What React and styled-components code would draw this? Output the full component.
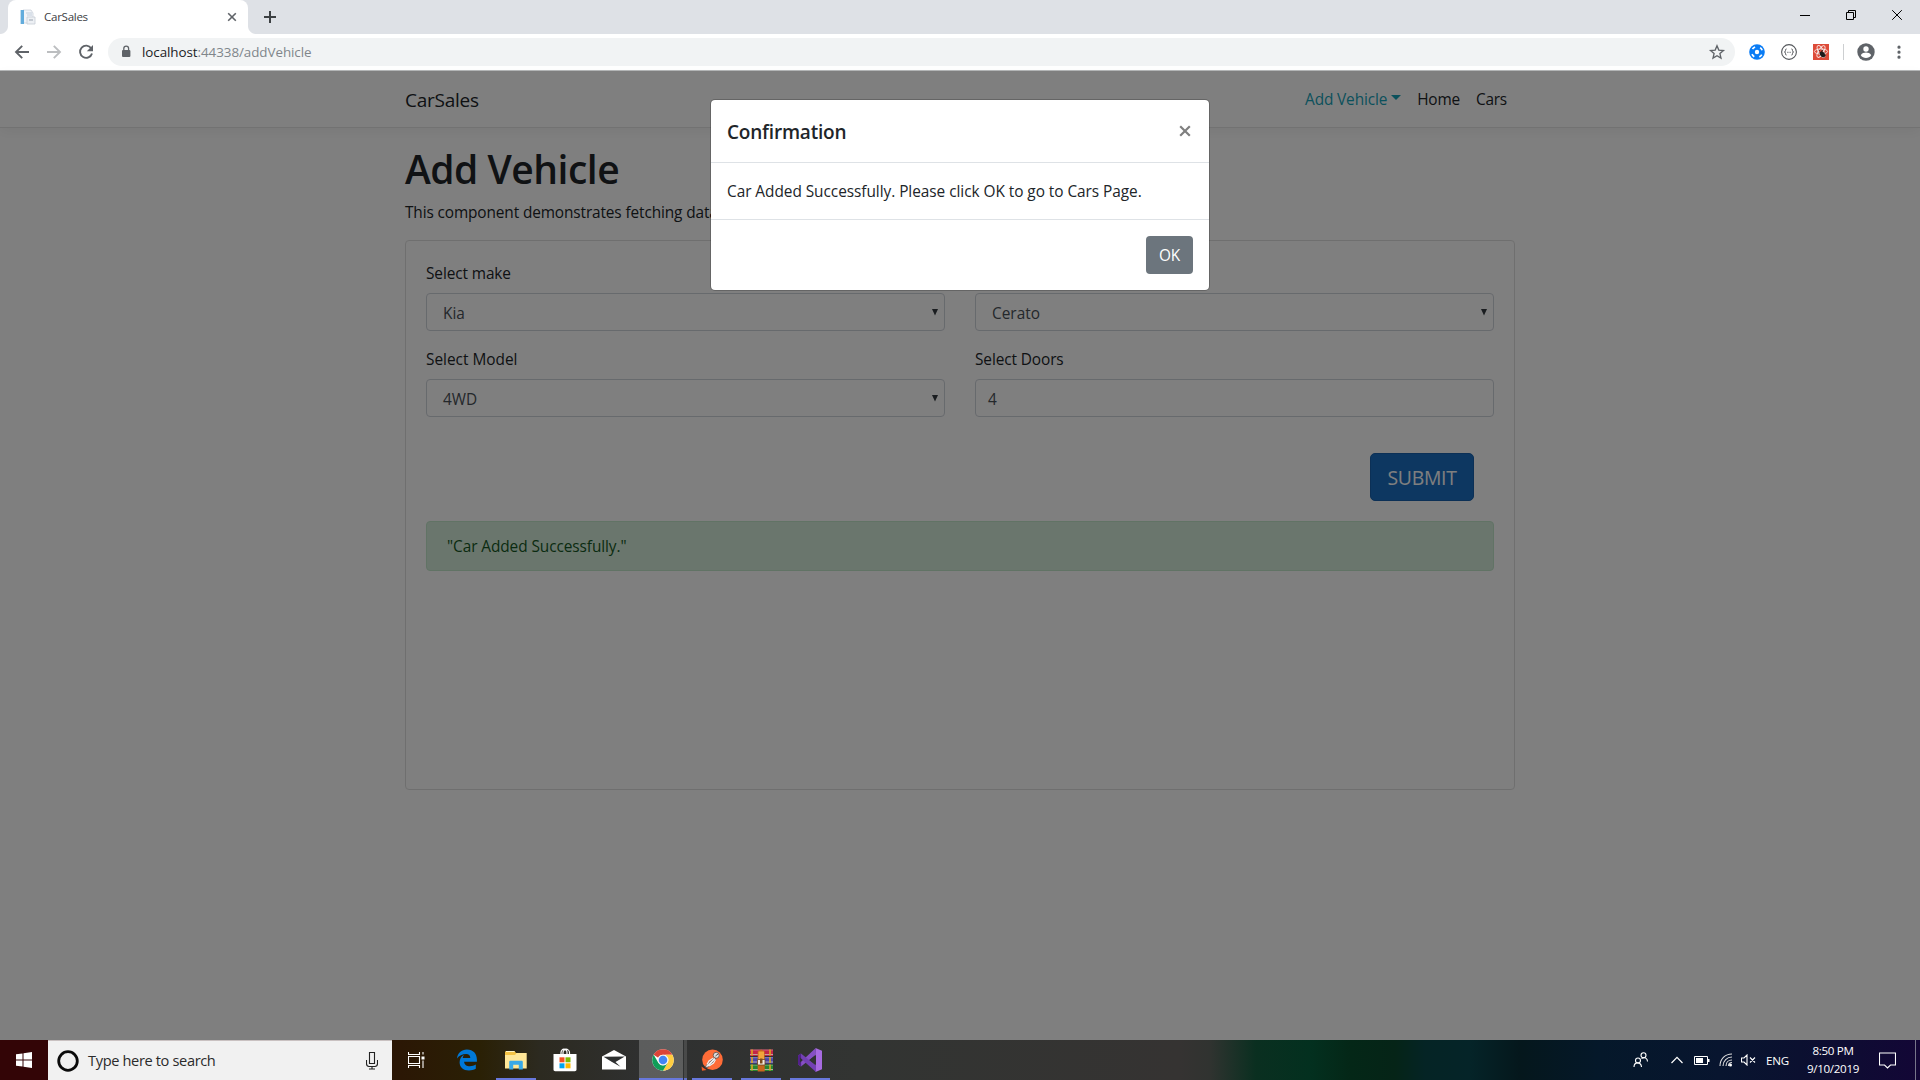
import React from 'react';
import styled, { createGlobalStyle } from 'styled-components';

const Global = createGlobalStyle`
  *, *::before, *::after { box-sizing: border-box; }
  body { margin: 0; background: #fff; }
  button, input { font: inherit; }
`;

const Screen = styled.div`
  width: 1920px;
  height: 1080px;
  display: flex;
  flex-direction: column;
  overflow: hidden;
  font-family: "Open Sans", "Noto Sans", sans-serif;
  font-size: 15.4px;
  line-height: 24px;
  color: #212529;
`;

const Text = styled.span`
  display: block;
  white-space: nowrap;
  padding-top: 1px;
  margin-bottom: -1px;
  letter-spacing: ${(p) => p.$ls || 0}px;
`;

/* ---------- browser ---------- */
const TabStrip = styled.header`
  height: 34px;
  flex: none;
  display: flex;
  background: #dee1e6;
  padding-left: 8px;
`;
const Tab = styled.div`
  width: 240px;
  height: 34px;
  display: flex;
  align-items: center;
  padding: 0 11px 0 12px;
  background: #fff;
  border-radius: 8px 8px 0 0;
  font-size: 11.6px;
  color: #3c4043;
  position: relative;
  &::before, &::after {
    content: "";
    position: absolute;
    bottom: 0;
    width: 8px;
    height: 8px;
  }
  &::before { left: -8px; background: radial-gradient(circle at 0 0, transparent 7.5px, #fff 8.5px); }
  &::after { right: -8px; background: radial-gradient(circle at 100% 0, transparent 7.5px, #fff 8.5px); }
  svg:last-child { margin-left: auto; }
`;
const TabTitle = styled.span`
  margin-left: 8px;
  letter-spacing: -0.3px;
`;
const NewTab = styled.div`
  display: flex;
  align-items: center;
  margin-left: 16px;
`;
const WindowButtons = styled.div`
  margin-left: auto;
  display: flex;
  height: 29px;
  > span { width: 46px; display: grid; place-items: center; }
`;
const Toolbar = styled.div`
  height: 37px;
  flex: none;
  display: flex;
  align-items: center;
  background: #fff;
  border-bottom: 1px solid #b6b8b9;
  padding: 0 12px;
`;
const NavButtons = styled.div`
  display: flex;
  gap: 12px;
`;
const AddressBar = styled.div`
  width: 1627px;
  height: 28px;
  margin-left: 12px;
  border-radius: 14px;
  background: #f1f3f4;
  display: flex;
  align-items: center;
  padding: 0 9px 0 12px;
  font-size: 13.4px;
  color: #80868b;
  b { font-weight: 400; color: #202124; }
  svg:last-child { margin-left: auto; }
`;
const Url = styled.span`
  margin-left: 10px;
  letter-spacing: -0.06px;
`;
const Extensions = styled.div`
  display: flex;
  align-items: center;
  margin-left: 14px;
  gap: 16px;
`;
const Divider = styled.i`
  width: 1px;
  height: 16px;
  background: #cdcfd1;
  margin: 0 -3px 0 -2px;
`;

/* ---------- page ---------- */
const Page = styled.main`
  flex: 1;
  min-height: 0;
  position: relative;
  background: #fff;
`;
const Navbar = styled.nav`
  height: 57px;
  border-bottom: 1px solid #e5e5e5;
  box-shadow: 0 4px 12px rgba(0, 0, 0, 0.05);
  display: flex;
  justify-content: center;
`;
const Container = styled.div`
  width: 1110px;
  margin: 0 auto;
`;
const NavInner = styled(Container)`
  display: flex;
  align-items: center;
`;
const Brand = styled.div`
  font-size: 19px;
  line-height: 30px;
  flex: 1;
`;
const NavLinks = styled.div`
  display: flex;
  gap: 16px;
  padding-right: 8px;
`;
const NavItem = styled.a`
  color: ${(p) => (p.$accent ? '#17a2b8' : '#212529')};
  display: flex;
  align-items: center;
`;
const Caret = styled.i`
  margin-left: 4px;
  margin-top: -3px;
  border: 5px solid transparent;
  border-top-color: currentColor;
  border-bottom: 0;
`;
const Title = styled.h1`
  margin: 16px 0 8px;
  height: 48px;
  font-size: 39px;
  font-weight: 600;
  line-height: 48px;
`;
const Lead = styled.p`
  height: 24px;
  margin: 0 0 16px;
`;
const Card = styled.section`
  height: 550px;
  border: 1px solid #dfdfdf;
  border-radius: 4px;
  padding: 20px;
`;
const FormGrid = styled.div`
  display: grid;
  grid-template-columns: 1fr 1fr;
  gap: 16px 30px;
`;
const Field = styled.div`
  display: flex;
  flex-direction: column;
  gap: 8px;
`;
const Control = styled.div`
  height: 38px;
  border: 1px solid #ced4da;
  border-radius: 4px;
  padding: 1px 6px 0 ${(p) => (p.$select ? 16 : 12)}px;
  display: flex;
  align-items: center;
  justify-content: space-between;
  color: #495057;
`;
const Actions = styled.div`
  display: flex;
  justify-content: flex-end;
  padding: 36px 20px 20px;
`;
const Submit = styled.button`
  width: 104px;
  height: 48px;
  padding: 0;
  border: 1px solid #1861ac;
  border-radius: 5px;
  background: #1b6ec2;
  color: #fff;
  font-size: 19.4px;
`;
const Alert = styled.div`
  height: 50px;
  padding: 12px 20px;
  border: 1px solid #c3e6cb;
  border-radius: 4px;
  background: #d4edda;
  color: #155724;
`;
const Backdrop = styled.div`
  position: absolute;
  inset: 0;
  background: rgba(0, 0, 0, 0.5);
  display: flex;
  justify-content: center;
  align-items: flex-start;
  padding-top: 28px;
`;
const Modal = styled.div`
  width: 500px;
  border: 1px solid rgba(0, 0, 0, 0.2);
  border-radius: 5px;
  background: #fff;
  background-clip: padding-box;
`;
const ModalHeader = styled.div`
  height: 63px;
  padding: 16px;
  display: flex;
  justify-content: space-between;
  border-bottom: 1px solid #dee2e6;
  font-size: 19px;
  font-weight: 600;
  line-height: 30px;
  svg { margin: 9px 2px 0 0; }
`;
const ModalBody = styled.div`
  height: 56px;
  padding: 16px;
`;
const ModalFooter = styled.div`
  display: flex;
  justify-content: flex-end;
  padding: 16px;
  border-top: 1px solid #dee2e6;
`;
const OkButton = styled.button`
  width: 47px;
  height: 38px;
  padding: 0;
  border: 0;
  border-radius: 4px;
  background: #6c757d;
  color: #fff;
`;

/* ---------- taskbar ---------- */
const Taskbar = styled.footer`
  height: 40px;
  flex: none;
  display: flex;
  background: linear-gradient(90deg, #330506 0, #330506 48px, #2b1605 392px, #2a2005 480px, #2c2a20 540px, #2f3030 640px, #323432 860px, #353332 1180px, #303330 1210px, #0a2f20 1256px, #03301f 1310px, #042717 1350px, #052417 1395px, #052425 1425px, #052428 1470px, #05171c 1520px, #05182a 1600px, #08152f 1720px, #0b1030 1800px, #130636 1920px);
`;
const Start = styled.div`
  width: 48px;
  display: grid;
  place-items: center;
`;
const Search = styled.div`
  width: 344px;
  background: #f1f1f1;
  border-top: 1px solid #c9c1c1;
  display: flex;
  align-items: center;
  padding: 0 14px 0 9px;
  font-size: 14.6px;
  color: #2b2b2b;
  svg:last-child { margin-left: auto; }
`;
const SearchText = styled.span`
  margin-left: 9px;
  padding-bottom: 1px;
  letter-spacing: -0.36px;
`;
const TaskItem = styled.div`
  width: ${(p) => p.$w || 49}px;
  margin-left: ${(p) => p.$ml || 0}px;
  padding-left: ${(p) => p.$pl || 0}px;
  display: grid;
  place-items: center;
  background: ${(p) => (p.$active ? 'rgba(255,255,255,.22)' : 'none')};
  box-shadow: ${(p) => (p.$open ? 'inset 0 -2px #6878dc' : 'none')};
`;
const ActiveEdge = styled.i`
  width: 4px;
  background: rgba(255, 255, 255, 0.12);
  border-left: 1px solid #303232;
  box-shadow: inset 0 -2px #6070c8;
`;
const Tray = styled.div`
  margin-left: auto;
  display: flex;
  align-items: center;
  color: #fff;
  font-size: 11.6px;
`;
const TrayIcon = styled.span`
  width: ${(p) => p.$w}px;
  padding-right: ${(p) => p.$pr || 0}px;
  display: grid;
  place-items: center;
`;
const Clock = styled.div`
  width: 66px;
  text-align: center;
  line-height: 18px;
  letter-spacing: -0.3px;
`;
const ShowDesktop = styled.i`
  align-self: stretch;
  width: 5px;
  border-left: 1px solid #77758a;
`;

/* ---------- icons ---------- */
const Svg = ({ w = 24, h = w, box = `0 0 ${w} ${h}`, children, ...rest }) => (
  <svg width={w} height={h} viewBox={box} fill="none" style={{ display: 'block', flex: 'none' }} {...rest}>{children}</svg>
);

const Favicon = () => (
  <Svg w={16}>
    <path d="M3 1h8l2 3v10H3z" fill="#f1f4f8" stroke="#ccd2da" strokeWidth=".8" />
    <path d="M6 4h6M7 6h5" stroke="#c3cedb" />
    <path d="M7 8h8v7H7z" fill="#edf0f4" stroke="#c6cdd6" strokeWidth=".8" />
    <path d="M9 10h4v2H9z" fill="#c4cad2" />
    <path d="M1 1h3v14H1z" fill="#62acdc" />
    <path d="M.5 1v14" stroke="#c5dff0" />
  </Svg>
);
const Lock = () => (
  <Svg w={12} h={14}>
    <rect x="2" y="5" width="8.4" height="7" rx="1" fill="#5f6368" />
    <path d="M3.8 5V3.500a2.400 2.400 0 0 1 4.800 0V5" stroke="#5f6368" strokeWidth="1.300" />
  </Svg>
);
const Ring = () => (
  <Svg w={16}>
    <circle cx="8" cy="8" r="7.800" fill="#0a7cf5" />
    <circle cx="8" cy="8" r="2.200" fill="#fff" />
    <circle cx="8" cy="8" r="5.400" stroke="#fff" strokeWidth="1.700" strokeDasharray="3.200 5.280" strokeDashoffset="-2.640" />
  </Svg>
);
const Braces = () => (
  <Svg w={18} style={{ display: 'block', margin: '0 -1px' }}>
    <circle cx="9" cy="9" r="7.400" stroke="#55585c" strokeWidth="1.100" />
    <path d="M6.600 6c-1.100 0-1.100.4-1.100 1.300S5.200 9 4.400 9c.8 0 1.100.7 1.100 1.700S5.500 12 6.600 12M11.400 6c1.100 0 1.100.4 1.100 1.300s.3 1.700 1.100 1.700c-.8 0-1.100.7-1.100 1.700s0 1.300-1.100 1.300M7.300 9.300h.8m.5 0h.8m.5 0h.8" stroke="#55585c" />
  </Svg>
);
const Atom = () => (
  <Svg w={16}>
    <path d="M0 0h16v16H0z" fill="#dd4b39" />
    <g stroke="#fff" strokeWidth=".9" strokeOpacity=".85">
      <ellipse cx="8" cy="7.500" rx="6.600" ry="2.500" />
      <ellipse cx="8" cy="7.500" rx="6.600" ry="2.500" transform="rotate(60 8 7.5)" />
      <ellipse cx="8" cy="7.500" rx="6.600" ry="2.500" transform="rotate(120 8 7.5)" />
    </g>
    <ellipse cx="9.300" cy="10.300" rx="2.300" ry="3.200" fill="#1d1b1b" transform="rotate(-35 9.300 10.300)" />
    <path d="M6 7l1-1.500M8 7.500l2-1.500M7 10l5-1M8 12l5-1M11 13.500l1.500-2" stroke="#1d1b1b" strokeWidth=".8" />
  </Svg>
);
const Avatar = () => (
  <Svg w={18}>
    <circle cx="9" cy="9" r="8.700" fill="#5f6368" />
    <circle cx="9" cy="6" r="2.700" fill="#fff" />
    <path d="M3.800 12.300c.6-2 3.600-2.700 5.200-2.700s4.600.7 5.200 2.700a6.200 6.200 0 0 1-10.400 0z" fill="#fff" />
  </Svg>
);
const Edge = () => (
  <Svg w={22}>
    <path d="M1 9.800C1.600 4.300 5.400.8 10.900.8c6.300 0 10 4.200 10 10v2.300H8.100c.2 3.200 2.700 4.500 5.800 4.500 2.200 0 4.200-.7 5.900-1.700v4.200c-2 1.100-4.300 1.600-6.800 1.600-5.700 0-9.400-3.100-9.400-8.200 0-3.300 1.700-6 4.600-7.500-1 1.100-1.300 2.300-1.400 3.400h7.500c0-2.600-1.500-4.100-4.200-4.100-3.800 0-7 1.700-9.100 4.500z" fill="#0078d7" transform="translate(0 -.3)" />
  </Svg>
);
const Folder = () => (
  <Svg w={22} h={20}>
    <path d="M0 2.500C0 1.700.5 1 1.500 1h8l1.500 2h10v15H0z" fill="#f5c344" />
    <path d="M1 1.500h8.500" stroke="#fff3c4" />
    <path d="M0 5h10l1.500-2H21.700v15.500H0z" fill="#ffe798" />
    <path d="M4.200 19.500v-7.400c0-.8.5-1.300 1.300-1.300h11c.8 0 1.300.5 1.300 1.300v7.400h-4v-4.700H8.200v4.700z" fill="#38a9e8" />
  </Svg>
);
const Store = () => (
  <Svg w={24}>
    <path d="M8 7V4.500C8 2.500 9.500 1.200 11 1.200s3 1.300 3 3.300V7M10 7V4.500C10 2.500 11.500 1.200 13 1.200s3.500 1.300 3.500 3.300V7" stroke="#fff" strokeWidth="1.200" />
    <path d="M.5 6h23v15.500c0 1-.7 1.700-1.700 1.700H2.200c-1 0-1.700-.7-1.700-1.700z" fill="#fff" />
    <path d="M6.500 9.300h5v5h-5z" fill="#f25022" /><path d="M12.500 9.300h5v5h-5z" fill="#7fba00" />
    <path d="M6.500 15.300h5v5h-5z" fill="#00a4ef" /><path d="M12.500 15.300h5v5h-5z" fill="#ffb900" />
  </Svg>
);
const Mail = () => (
  <Svg w={24} h={20}>
    <path d="M0 6.500L12 0l12 6.500v13H0z" fill="#fff" />
    <path d="M1.500 6.800L22.800 6.500 13.500 12l5 4.800L10 12z" fill="#2e3030" />
  </Svg>
);
const Chrome = () => (
  <Svg w={22} box="0 0 48 48">
    <circle cx="24" cy="24" r="23.500" fill="#fff" />
    <path d="M3.600 12.300A23.500 23.500 0 0 1 44.400 12.300H24a11.700 11.700 0 0 0-10.600 6.800z" fill="#db4437" />
    <path d="M44.400 12.300A23.500 23.500 0 0 1 24 47.500l10.200-17.600a11.700 11.700 0 0 0 0-11.700L31 14.600 30 12.300z" fill="#ffcd40" />
    <path d="M3.600 12.300A23.500 23.500 0 0 0 24 47.500l10.200-17.600a11.700 11.700 0 0 1-20.400 0z" fill="#0f9d58" />
    <circle cx="24" cy="24" r="11.700" fill="#f1f1f1" />
    <circle cx="24" cy="24" r="9.300" fill="#4285f4" />
  </Svg>
);
const Postman = () => (
  <Svg w={22}>
    <circle cx="11.500" cy="10.800" r="10.300" fill="#ff6c37" />
    <path d="M.5 17.500l5 3.500-4.500.8z" fill="#ef5b25" />
    <path d="M13.500 8.500l1.500 1.500-7.500 8-2.500.5-.5-1.500z" fill="#eee" stroke="#5b4b46" strokeWidth=".8" />
    <path d="M12.500 9l-4.500 3-2 3.500M14.500 10.500l-2 3.500-4.500 3" stroke="#eee" strokeWidth="1.300" />
    <circle cx="15.200" cy="6.300" r="3" fill="#ddd" stroke="#5b4b46" strokeWidth=".8" />
    <path d="M14.500 7l2.500-2" stroke="#5b4b46" />
  </Svg>
);
const WinRar = () => (
  <Svg w={24} h={23}>
    <path d="M1 .5h23v6.500H1z" fill="#c22648" /><path d="M1 8h23v6.500H1z" fill="#4a46a8" /><path d="M1 15.500h23V22H1z" fill="#27852f" />
    <path d="M1 1h23M1 8.700h23M1 16.200h23" stroke="#fff" strokeOpacity=".3" />
    <path d="M1 5.500h23M1 13h23M1 20.500h23" stroke="#c9bdb8" strokeWidth=".8" />
    <path d="M3 .5v6M3 8v6M3 15.500v6M21 .5v6M21 8v6M21 15.500v6" stroke="#dca522" strokeWidth="1.600" />
    <path d="M8.700 2.500l3.500-2 3.500 2v20H8.700z" fill="#c8661c" />
    <path d="M9.500 2.500h5.500v8H9.500z" fill="#f0a53b" />
    <path d="M8.500 10.500h7.500v5.500H8.500z" fill="#f2e8dc" stroke="#6d4320" strokeWidth=".8" /><path d="M11 9.500h2.500v5H11z" fill="#7d4a1c" />
  </Svg>
);
const VisualStudio = () => (
  <Svg w={24}>
    <path d="M17.500 0L24 2.800v18.400L17.500 24z" fill="#a76be0" />
    <path d="M17.500 0L18 6.500 3 18.500l-3-2L17.500.2z" fill="#8650c4" />
    <path d="M0 7.500l3-2L18 17.500v6.500L0 8z" fill="#7340b4" />
    <path d="M0 7.500l3-2 .2 13L0 16.500z" fill="#52218a" />
    <path d="M2 9.500v5L4.600 12z" fill="#303232" />
    <path d="M18 7v10l-6.300-5z" fill="#303232" />
  </Svg>
);

const SelectField = ({ label, value, select = true, ls = -0.1 }) => (
  <Field>
    <Text $ls={ls}>{label}</Text>
    <Control $select={select}>
      <Text>{value}</Text>
      {select && <Svg w={6} h={8}><path d="M0 0h6L3 6.500z" fill="#343a40" /></Svg>}
    </Control>
  </Field>
);

export default function App() {
  return (
    <Screen>
      <Global />
      <TabStrip>
        <Tab>
          <Favicon />
          <TabTitle>CarSales</TabTitle>
          <Svg w={10}><path d="M1.200 1.200l7.600 7.600M8.800 1.200L1.200 8.800" stroke="#5f6368" strokeWidth="1.600" /></Svg>
        </Tab>
        <NewTab><Svg w={12}><path d="M6 0v12M0 6h12" stroke="#3c4043" strokeWidth="2" /></Svg></NewTab>
        <WindowButtons>
          <span><Svg w={10}><path d="M0 5.500h10" stroke="#000" /></Svg></span>
          <span><Svg w={10}><path d="M.5 2.500h7v7h-7zM2.500 2.500v-2h7v7h-2" stroke="#000" /></Svg></span>
          <span><Svg w={10}><path d="M.2.200l9.600 9.600M9.800.200L.2 9.800" stroke="#000" /></Svg></span>
        </WindowButtons>
      </TabStrip>
      <Toolbar>
        <NavButtons>
          <Svg w={20}><path d="M17 10H4.500M10.200 3.800L4 10l6.200 6.200" stroke="#5f6368" strokeWidth="1.900" /></Svg>
          <Svg w={20}><path d="M3 10h12.500M9.800 3.800L16 10l-6.200 6.200" stroke="#bcbec0" strokeWidth="1.900" /></Svg>
          <Svg w={20}><path d="M15.200 6.300A6.100 6.100 0 1 0 16 11.500" stroke="#5f6368" strokeWidth="1.900" /><path d="M17 3v6.200h-6.200z" fill="#5f6368" /></Svg>
        </NavButtons>
        <AddressBar>
          <Lock />
          <Url><b>localhost</b>:44338/addVehicle</Url>
          <Svg w={18} box="0 0 24 24"><path d="M12 3.800l2.400 5.700 6.200.5-4.700 4.100 1.400 6L12 16.900l-5.300 3.200 1.400-6L3.400 10l6.200-.5z" stroke="#5f6368" strokeWidth="1.800" /></Svg>
        </AddressBar>
        <Extensions>
          <Ring /><Braces /><Atom /><Divider />
          <Avatar />
          <Svg w={16}><path d="M8 3.200h.01M8 8.200h.01M8 13.200h.01" stroke="#5f6368" strokeWidth="3.200" strokeLinecap="round" /></Svg>
        </Extensions>
      </Toolbar>

      <Page>
        <Navbar>
          <NavInner>
            <Brand><Text $ls={-0.25}>CarSales</Text></Brand>
            <NavLinks>
              <NavItem $accent><Text $ls={-0.13}>Add Vehicle</Text><Caret /></NavItem>
              <NavItem><Text $ls={-0.2}>Home</Text></NavItem>
              <NavItem><Text $ls={-0.2}>Cars</Text></NavItem>
            </NavLinks>
          </NavInner>
        </Navbar>
        <Container>
          <Title><Text $ls={-0.5}>Add Vehicle</Text></Title>
          <Lead><Text $ls={-0.12}>This component demonstrates fetching data from the server.</Text></Lead>
          <Card>
            <FormGrid>
              <SelectField label="Select make" value="Kia" />
              <SelectField label="Select Model" value="Cerato" />
              <SelectField label="Select Model" value="4WD" ls={0} />
              <SelectField label="Select Doors" value="4" select={false} />
            </FormGrid>
            <Actions><Submit type="button"><Text $ls={-0.3}>SUBMIT</Text></Submit></Actions>
            <Alert><Text $ls={-0.08}>"Car Added Successfully."</Text></Alert>
          </Card>
        </Container>
        <Backdrop>
          <Modal>
            <ModalHeader>
              <Text $ls={-0.2}>Confirmation</Text>
              <Svg w={12} h={12}><path d="M1.200 1.200l9.600 9.600M10.800 1.200L1.200 10.800" stroke="#7f7f7f" strokeWidth="2.200" /></Svg>
            </ModalHeader>
            <ModalBody><Text $ls={-0.045}>Car Added Successfully. Please click OK to go to Cars Page.</Text></ModalBody>
            <ModalFooter><OkButton type="button"><Text $ls={-0.2}>OK</Text></OkButton></ModalFooter>
          </Modal>
        </Backdrop>
      </Page>

      <Taskbar>
        <Start><Svg w={16}><path d="M0 2.300L6.500 1.400v6.100H0zM7.500 1.200L16 0v7.500H7.500zM0 8.500h6.500v6.100L0 13.700zM7.500 8.500H16V16l-8.500-1.200z" fill="#fff" /></Svg></Start>
        <Search>
          <Svg w={22}><circle cx="11" cy="11" r="9.300" stroke="#0b0b0b" strokeWidth="2.800" /></Svg>
          <SearchText>Type here to search</SearchText>
          <Svg w={12} h={18}><path d="M3.500.5h5v11h-5zM.5 8v3.500c0 2 1 3 2.500 3h6c1.500 0 2.500-1 2.500-3V8M6 14.500V17M3 17h6" stroke="#222" strokeWidth="1.100" /></Svg>
        </Search>
        <TaskItem $w={48}><Svg w={17} h={16}><path d="M.5 0v2.500h11V0M.5 16v-2.500h11V16M.5 4.500h11v7H.5zM15 0v2.500M15 8.500V16" stroke="#fff" strokeWidth="1.100" /><path d="M13.500 4.500h3v3h-3z" fill="#fff" /></Svg></TaskItem>
        <TaskItem $w={54}><Edge /></TaskItem>
        <TaskItem $open $w={40} $ml={2}><Folder /></TaskItem>
        <TaskItem $w={49} $ml={4}><Store /></TaskItem>
        <TaskItem $w={49}><Mail /></TaskItem>
        <TaskItem $active $open $w={44} $ml={1} $pl={4}><Chrome /></TaskItem>
        <ActiveEdge />
        <TaskItem $open $w={40} $ml={5}><Postman /></TaskItem>
        <TaskItem $open $w={40} $ml={9}><WinRar /></TaskItem>
        <TaskItem $open $w={40} $ml={9}><VisualStudio /></TaskItem>
        <Tray>
          <TrayIcon $w={35} $pr={3}><Svg w={16}><circle cx="10.500" cy="3.300" r="2.500" stroke="#fff" strokeWidth="1.100" /><circle cx="5" cy="8.500" r="2.500" stroke="#fff" strokeWidth="1.100" /><path d="M8.500 6.500c3.500-2 6 0 6 3M1 15c0-5.500 7-5.500 7.500 0" stroke="#fff" strokeWidth="1.100" /></Svg></TrayIcon>
          <TrayIcon $w={34}><Svg w={12} h={8}><path d="M.5 7L6 1.300 11.500 7" stroke="#fff" strokeWidth="1.200" /></Svg></TrayIcon>
          <TrayIcon $w={16}><Svg w={16} h={10}><path d="M.5 1.500h13v8H.5z" stroke="#fff" /><path d="M2 3h7v5H2zM14 4h1.500v3H14z" fill="#fff" /></Svg></TrayIcon>
          <TrayIcon $w={31}><Svg w={14} h={14}><path d="M1 13C1 6 6 1 13 1M4 13c0-5 4-9 9-9M7 13c0-3.500 2.500-6 6-6M9.500 13c0-2 1.500-3.500 3.500-3.500" stroke="#ddd" strokeWidth="1.100" /><circle cx="11.500" cy="12" r="1.500" fill="#fff" /></Svg></TrayIcon>
          <TrayIcon $w={14}><Svg w={16} h={12}><path d="M.5 4h2.500L6 1v10L3 8H.5zM9 3.500l5 5M14 3.500l-5 5" stroke="#fff" strokeWidth="1.100" /></Svg></TrayIcon>
          <TrayIcon $w={45}><Text $ls={-0.15}>ENG</Text></TrayIcon>
          <Clock>8:50 PM<br />9/10/2019</Clock>
          <TrayIcon $w={49} $pr={6}><Svg w={17} h={17}><path d="M.5 1h16v12h-5L8.500 16l-3-3h-5z" stroke="#fff" strokeWidth="1.100" /></Svg></TrayIcon>
          <ShowDesktop />
        </Tray>
      </Taskbar>
    </Screen>
  );
}
